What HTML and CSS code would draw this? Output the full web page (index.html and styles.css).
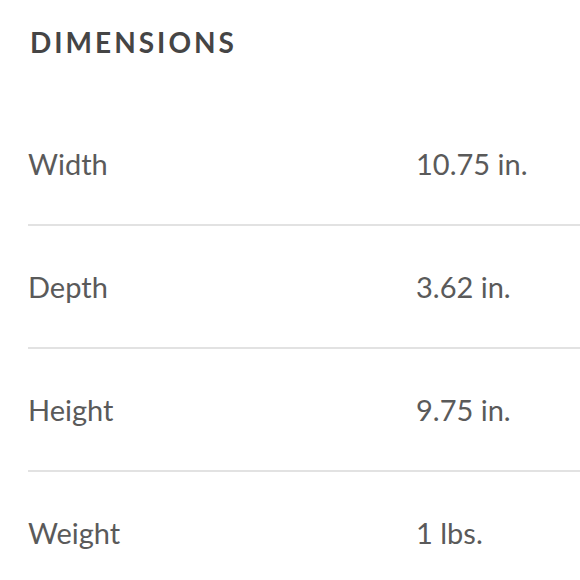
FILE: index.html
```html
<!DOCTYPE html>
<html>
<head>
<meta charset="utf-8">
<link rel="stylesheet" href="styles.css">
</head>
<body>
<section class="dims">
  <h2 class="dims-title">DIMENSIONS</h2>
  <div class="dims-list">
    <div class="dims-row"><span class="dims-label">Width</span><span class="dims-value">10.75 in.</span></div>
    <div class="dims-row"><span class="dims-label">Depth</span><span class="dims-value">3.62 in.</span></div>
    <div class="dims-row"><span class="dims-label">Height</span><span class="dims-value">9.75 in.</span></div>
    <div class="dims-row"><span class="dims-label">Weight</span><span class="dims-value">1 lbs.</span></div>
  </div>
</section>
</body>
</html>
```

FILE: styles.css
```css
html, body {
  margin: 0;
  padding: 0;
  background: #ffffff;
}
body {
  font-family: Lato, "Open Sans", sans-serif;
  width: 580px;
  height: 580px;
  overflow: hidden;
}
.dims {
  padding-left: 28px;
  padding-top: 26px;
}
.dims-title {
  margin: 0 0 45px 2px;
  font-size: 28px;
  line-height: 32px;
  font-weight: 700;
  letter-spacing: 3px;
  color: #454545;
}
.dims-row {
  display: grid;
  grid-template-columns: 388px 1fr;
  align-items: center;
  height: 121px;
  border-bottom: 2px solid #e2e2e2;
  font-size: 29px;
  color: #5a5a5a;
}
.dims-row:last-child {
  border-bottom: none;
}
```
